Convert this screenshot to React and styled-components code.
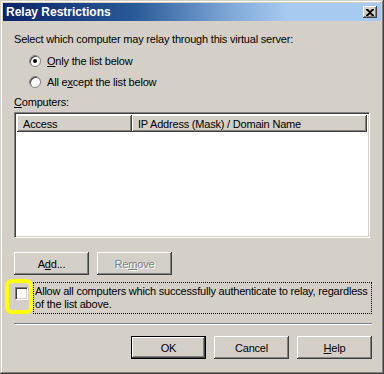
import React from "react";
import styled, { createGlobalStyle } from "styled-components";

const Global = createGlobalStyle`
  html, body {
    margin: 0;
    padding: 0;
    background: #d4d0c8;
  }
  * {
    box-sizing: border-box;
  }
`;

const Window = styled.div`
  position: relative;
  width: 384px;
  height: 374px;
  background: #d4d0c8;
  font-family: "Liberation Sans", Arial, sans-serif;
  font-size: 11px;
  letter-spacing: -0.2px;
  color: #000;
  padding: 3px;
  box-shadow: inset -1px -1px 0 #404040, inset 1px 1px 0 #d4d0c8,
    inset -2px -2px 0 #808080, inset 2px 2px 0 #ffffff;
  display: flex;
  flex-direction: column;
`;

const TitleBar = styled.div`
  height: 18px;
  display: flex;
  align-items: center;
  justify-content: space-between;
  padding: 0 3px 0 3px;
  background: linear-gradient(to right, #0a246a 0%, #2a5a98 35%, #7fa8d8 60%, #a6caf0 75%, #a6caf0 100%);
`;

const Title = styled.span`
  color: #fff;
  font-weight: bold;
  font-size: 12px;
  letter-spacing: 0;
`;

const CloseButton = styled.div`
  width: 14px;
  height: 12px;
  margin-right: 1px;
  background: #d4d0c8;
  box-shadow: inset -1px -1px 0 #404040, inset 1px 1px 0 #ffffff,
    inset -2px -2px 0 #808080;
  display: flex;
  align-items: center;
  justify-content: center;
`;

const Body = styled.div`
  flex: 1;
  padding: 12px 9px 0 11px;
  display: flex;
  flex-direction: column;
`;

const Prompt = styled.div`
  line-height: 13px;
`;

const RadioGroup = styled.div`
  display: flex;
  flex-direction: column;
  gap: 8px;
  margin: 8px 0 0 16px;
`;

const RadioRow = styled.label`
  display: flex;
  align-items: center;
  gap: 6px;
  height: 13px;
  margin-left: -1px;
`;

const RadioCircle = styled.span`
  width: 12px;
  height: 12px;
  border-radius: 50%;
  background: #fff;
  border: 1px solid #808080;
  box-shadow: inset 1px 1px 0 #404040;
  display: flex;
  align-items: center;
  justify-content: center;

  &::after {
    content: "";
    width: 4px;
    height: 4px;
    border-radius: 50%;
    background: ${(p) => (p.$checked ? "#000" : "transparent")};
  }
`;

const U = styled.span`
  text-decoration: underline;
`;

const ListLabel = styled.div`
  margin-top: 8px;
  line-height: 13px;
`;

const ListBox = styled.div`
  margin-top: 3px;
  margin-right: 2px;
  height: 126px;
  background: #fff;
  border: 1px solid;
  border-color: #808080 #ffffff #ffffff #808080;
  box-shadow: inset 1px 1px 0 #404040, inset -1px -1px 0 #d4d0c8;
  padding: 2px;
`;

const Header = styled.div`
  display: grid;
  grid-template-columns: 115px 1fr;
  height: 17px;
`;

const HeaderCell = styled.div`
  background: #d4d0c8;
  padding: 0 0 0 6px;
  display: flex;
  align-items: center;
  box-shadow: inset -1px -1px 0 #404040, inset 1px 1px 0 #ffffff,
    inset -2px -2px 0 #808080;
`;

const ButtonRow = styled.div`
  display: flex;
  gap: 8px;
  margin-top: ${(p) => p.$top || 14}px;
  justify-content: ${(p) => p.$align || "flex-start"};
`;

const Button = styled.div`
  width: ${(p) => p.$w || 75}px;
  height: 23px;
  background: #d4d0c8;
  display: flex;
  align-items: center;
  justify-content: center;
  color: ${(p) => (p.$disabled ? "#808080" : "#000")};
  text-shadow: ${(p) => (p.$disabled ? "1px 1px 0 #ffffff" : "none")};
  box-shadow: ${(p) =>
    p.$default
      ? "inset 0 0 0 1px #000, inset -2px -2px 0 #404040, inset 2px 2px 0 #ffffff, inset -3px -3px 0 #808080"
      : "inset -1px -1px 0 #404040, inset 1px 1px 0 #ffffff, inset -2px -2px 0 #808080"};
`;

const CheckRow = styled.div`
  position: relative;
  display: flex;
  align-items: flex-start;
  gap: 5px;
  margin-top: 7px;
`;

const CheckBox = styled.span`
  flex: none;
  width: 13px;
  height: 13px;
  margin: 5px 0 0 1px;
  background: #fff;
  border: 1px solid;
  border-color: #808080 #ffffff #ffffff #808080;
  box-shadow: inset 1px 1px 0 #404040, inset -1px -1px 0 #d4d0c8;
`;

const CheckLabel = styled.div`
  flex: 1;
  line-height: 13px;
  padding: 2px 0 2px 1px;
  border: 1px dotted #000;
`;

const Highlight = styled.div`
  position: absolute;
  left: -9px;
  top: -3px;
  width: 28px;
  height: 35px;
  border: 4px solid #ffff00;
  border-radius: 7px;
`;

const Separator = styled.div`
  margin-top: 9px;
  height: 2px;
  border-top: 1px solid #808080;
  border-bottom: 1px solid #ffffff;
`;

export default function App() {
  return (
    <>
      <Global />
      <Window>
        <TitleBar>
          <Title>Relay Restrictions</Title>
          <CloseButton>
            <svg width="8" height="7" viewBox="0 0 8 7">
              <path d="M0 0h2l2 2 2-2h2v1L5 3.5 8 6v1H6L4 5 2 7H0V6l3-2.5L0 1z" fill="#000" />
            </svg>
          </CloseButton>
        </TitleBar>
        <Body>
          <Prompt>Select which computer may relay through this virtual server:</Prompt>
          <RadioGroup>
            <RadioRow>
              <RadioCircle $checked />
              <span>
                <U>O</U>nly the list below
              </span>
            </RadioRow>
            <RadioRow>
              <RadioCircle />
              <span>
                All e<U>x</U>cept the list below
              </span>
            </RadioRow>
          </RadioGroup>
          <ListLabel>
            <U>C</U>omputers:
          </ListLabel>
          <ListBox>
            <Header>
              <HeaderCell>Access</HeaderCell>
              <HeaderCell>IP Address (Mask) / Domain Name</HeaderCell>
            </Header>
          </ListBox>
          <ButtonRow $top={14}>
            <Button>
              A<U>d</U>d...
            </Button>
            <Button $disabled>
              Re<U>m</U>ove
            </Button>
          </ButtonRow>
          <CheckRow>
            <CheckBox />
            <CheckLabel>
              Allow all computers which successfully authenticate to relay, regardless of the list above.
            </CheckLabel>
            <Highlight />
          </CheckRow>
          <Separator />
          <ButtonRow $top={11} $align="flex-end">
            <Button $default>OK</Button>
            <Button>Cancel</Button>
            <Button>
              <U>H</U>elp
            </Button>
          </ButtonRow>
        </Body>
      </Window>
    </>
  );
}
